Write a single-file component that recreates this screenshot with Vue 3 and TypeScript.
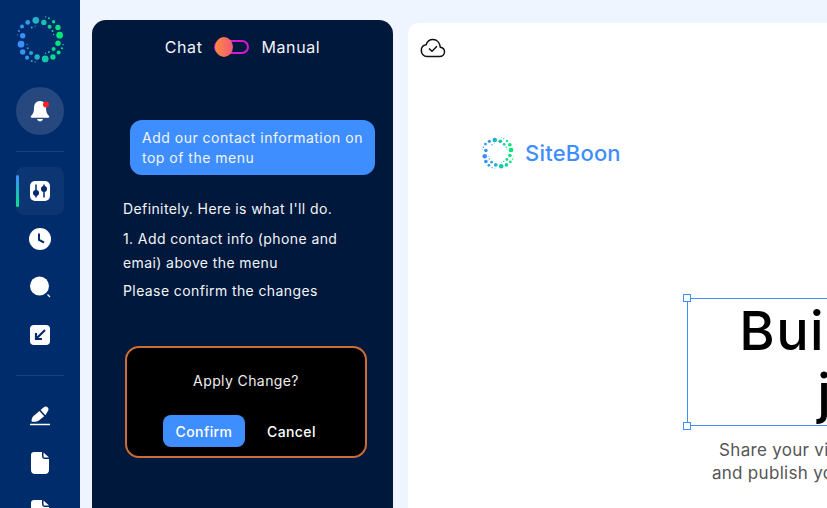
<template>
  <div class="app">
    <aside class="sidebar">
      <svg class="logo" viewBox="50 48 140 140">
        <circle v-for="(d, i) in dots" :key="i" :cx="d[0]" :cy="d[1]" :r="d[2]" :fill="dotColor(d[0])" />
      </svg>
      <div class="notify">
        <svg width="20" height="22" viewBox="0 0 20 22">
          <path d="M10 1C6 1 4 4 4 8c0 4-1 6-3 8-.6.7-.2 1.700.8 1.700h16.400c1 0 1.400-1 .8-1.700-2-2-3-4-3-8 0-4-2-7-6-7z" fill="#fff" />
          <path d="M7 19h6c-.5 1.500-1.600 2.300-3 2.300S7.500 20.500 7 19z" fill="#fff" />
          <circle cx="16" cy="4.500" r="3" fill="#f5222d" />
        </svg>
      </div>
      <div class="divider"></div>
      <div class="item active">
        <svg width="20" height="20" viewBox="0 0 20 20">
          <rect width="20" height="20" rx="5" fill="#fff" />
          <path d="M6 3.500v13M14 3.500v13" stroke="#002c6b" stroke-width="1.500" />
          <circle cx="6" cy="12" r="3" fill="#002c6b" />
          <circle cx="14" cy="8" r="3" fill="#002c6b" />
        </svg>
      </div>
      <div class="item">
        <svg width="22" height="22" viewBox="0 0 22 22">
          <circle cx="11" cy="11" r="11" fill="#fff" />
          <path d="M10 5.500V12l5 2.500" fill="none" stroke="#002c6b" stroke-width="2" />
        </svg>
      </div>
      <div class="item">
        <svg width="22" height="22" viewBox="0 0 22 22">
          <circle cx="10.500" cy="10" r="9.500" fill="#fff" />
          <path d="M18.500 18.500l2.500 2.500" stroke="#fff" stroke-width="1.200" />
        </svg>
      </div>
      <div class="item">
        <svg width="20" height="20" viewBox="0 0 20 20">
          <rect width="20" height="20" rx="4" fill="#fff" />
          <path d="M15 5L6 14M6 8v6h6" fill="none" stroke="#002c6b" stroke-width="2.200" />
        </svg>
      </div>
      <div class="divider"></div>
      <div class="item">
        <svg width="20" height="21" viewBox="0 0 20 21">
          <path d="M1.500 16.500c0-2.500.8-4.300 2-5.400L9.400 6l4.800 5.200-5.700 4.500c-1.200.9-2.700 1-4.300 1H2.200c-.4 0-.7-.3-.7-.7z" fill="#fff" />
          <path d="M10.600 5l3.200-2.700c1.200-1 3-.9 4 .2s1 2.900-.2 4l-2.200 3.700z" fill="#fff" />
          <path d="M0 19.500h20" stroke="#fff" stroke-width="1.500" />
        </svg>
      </div>
      <div class="item">
        <svg width="18" height="22" viewBox="0 0 18 22">
          <path d="M3 0h8v4c0 2 1 3 3 3h4v11c0 2.500-1.500 4-4 4H4c-2.500 0-4-1.500-4-4V3c0-2 1-3 3-3z" fill="#fff" />
          <path d="M12.500 .5L18 5.500h-4c-1 0-1.500-.5-1.500-1.500z" fill="#fff" />
        </svg>
      </div>
      <div class="item">
        <svg width="18" height="22" viewBox="0 0 18 22">
          <path d="M3 0h8v4c0 2 1 3 3 3h4v11c0 2.500-1.500 4-4 4H4c-2.500 0-4-1.500-4-4V3c0-2 1-3 3-3z" fill="#fff" />
          <path d="M12.500 .5L18 5.500h-4c-1 0-1.500-.5-1.500-1.500z" fill="#fff" />
        </svg>
      </div>
    </aside>

    <section class="chat">
      <header class="mode">
        <span>Chat</span>
        <span class="toggle"><span class="knob"></span></span>
        <span>Manual</span>
      </header>
      <div class="bubble">Add our contact information on top of the menu</div>
      <div class="reply">
        <p>Definitely. Here is what I'll do.</p>
        <p class="step">1. Add contact info (phone and emai) above the menu</p>
        <p>Please confirm the changes</p>
      </div>
      <div class="apply">
        <div class="apply-title">Apply Change?</div>
        <div class="apply-actions">
          <button class="confirm">Confirm</button>
          <button class="cancel">Cancel</button>
        </div>
      </div>
    </section>

    <main class="canvas">
      <svg class="cloud" width="26" height="20" viewBox="0 0 26 20">
        <path d="M7 18.500h12.500c2.800 0 5-2 5-4.700 0-2.500-1.800-4.300-4.200-4.600C19.800 4.800 17 1.500 13 1.500c-3.500 0-6 2.300-6.800 5.200C3.300 7.200 1.300 9.500 1.300 12.400c0 3.400 2.500 6.100 5.700 6.100z" fill="none" stroke="#111" stroke-width="1.500" />
        <path d="M9 10.500l3 2.800 5-5" fill="none" stroke="#111" stroke-width="1.500" />
      </svg>
      <div class="brand">
        <svg class="brand-logo" viewBox="50 48 140 140">
          <circle v-for="(d, i) in dots" :key="i" :cx="d[0]" :cy="d[1]" :r="d[2]" :fill="dotColor(d[0])" />
        </svg>
        <span>SiteBoon</span>
      </div>
      <div class="selected">
        <span class="handle tl"></span>
        <span class="handle bl"></span>
        <h1>Build fast<br />just</h1>
      </div>
      <p class="sub">Share your vision, build your site<br />and publish your website in a click</p>
    </main>
  </div>
</template>

<script setup lang="ts">
// x, y, r measured off the logo
const dots: number[][] = [
  [67, 107, 8], [65, 79, 6], [82, 67, 7], [106, 61, 10], [130, 67, 8], [147, 80, 6],
  [172, 82, 8], [177, 105, 10], [172, 129, 8], [174, 157, 6], [157, 170, 8], [134, 176, 10],
  [110, 170, 8], [80, 172, 6], [67, 155, 8], [62, 132, 10], [92, 158, 6], [159, 146, 6],
  [56, 93, 3], [52, 104, 2], [94, 82, 3], [104, 78, 2], [135, 51, 2], [145, 55, 3],
  [159, 65, 5], [156, 93, 3], [159, 103, 2], [187, 133, 2], [184, 144, 3], [145, 155, 3],
  [135, 159, 2], [104, 185, 2], [94, 182, 3], [80, 133, 2], [82, 144, 3],
]

const dotColor = (x: number): string => {
  const t = Math.min(1, Math.max(0, (x - 60) / 115))
  const r = Math.round(60 - 60 * t)
  const g = Math.round(140 + 90 * t)
  const b = Math.round(255 - 135 * t)
  return `rgb(${r}, ${g}, ${b})`
}
</script>

<style>
html,
body {
  margin: 0;
  overflow: hidden;
}
</style>

<style scoped>
.app {
  display: flex;
  width: 827px;
  height: 508px;
  overflow: hidden;
  background: #eef5ff;
  font-family: Inter, "Open Sans", sans-serif;
}

.sidebar {
  flex: none;
  width: 80px;
  display: flex;
  flex-direction: column;
  align-items: center;
  background: #002c6b;
}

.logo {
  flex: none;
  width: 47px;
  height: 47px;
  margin-top: 16px;
  margin-bottom: 24px;
}

.notify {
  flex: none;
  width: 48px;
  height: 48px;
  display: flex;
  align-items: center;
  justify-content: center;
  border-radius: 50%;
  background: #26487f;
}

.divider {
  flex: none;
  width: 48px;
  height: 1px;
  margin: 16px 0 15px;
  background: #1a4079;
}

.item {
  flex: none;
  position: relative;
  width: 48px;
  height: 48px;
  display: flex;
  align-items: center;
  justify-content: center;
  border-radius: 8px;
}

.item.active {
  background: #0c3573;
}

.item.active::before {
  content: "";
  position: absolute;
  left: 0;
  top: 8px;
  width: 3px;
  height: 32px;
  border-radius: 2px;
  background: linear-gradient(#3c8cff, #00e68a);
}

.chat {
  flex: none;
  width: 301px;
  margin: 20px 15px 0 12px;
  box-sizing: border-box;
  padding: 0 18px 0 31px;
  border-radius: 14px 14px 0 0;
  background: #00183b;
  color: #f2f5fa;
  font-size: 14px;
  letter-spacing: 0.4px;
}

.mode {
  display: flex;
  align-items: center;
  justify-content: center;
  gap: 12px;
  height: 54px;
  margin-left: -31px;
  margin-right: -18px;
  font-size: 16px;
  letter-spacing: 0.6px;
}

.toggle {
  position: relative;
  box-sizing: border-box;
  width: 35px;
  height: 14px;
  border: 2.500px solid #d31bd6;
  border-radius: 7px;
}

.knob {
  position: absolute;
  left: -1px;
  top: -5px;
  width: 18px;
  height: 20px;
  border-radius: 50%;
  background: linear-gradient(90deg, #ff8a3d, #ef5a7a);
}

.bubble {
  width: 245px;
  box-sizing: border-box;
  margin: 46px 0 0 7px;
  padding: 8px 12px 7px;
  border-radius: 12px;
  background: #3f8eff;
  letter-spacing: 0.5px;
  line-height: 20px;
}

.reply {
  margin-top: 22px;
  line-height: 24px;
}

.reply p {
  margin: 0;
  padding-bottom: 6px;
}

.reply .step {
  padding-bottom: 4px;
  width: 235px;
}

.apply {
  width: 242px;
  height: 112px;
  box-sizing: border-box;
  margin: 37px 0 0 2px;
  padding-top: 23px;
  border: 2px solid #c96f35;
  border-radius: 14px;
  background: #000;
  text-align: center;
}

.apply-title {
  line-height: 20px;
  color: #eee;
}

.apply-actions {
  display: flex;
  align-items: center;
  margin: 24px 0 0 36px;
}

button {
  border: 0;
  font: inherit;
  font-weight: 500;
  letter-spacing: inherit;
  color: #fff;
  background: none;
  padding: 0;
}

.confirm {
  width: 82px;
  height: 32px;
  border-radius: 8px;
  background: #3f8eff;
}

.cancel {
  margin-left: 22px;
}

.canvas {
  flex: 1;
  min-width: 0;
  margin-top: 23px;
  overflow: hidden;
  border-radius: 10px 0 0 0;
  background: #fff;
}

.cloud {
  display: block;
  margin: 15px 0 0 12px;
}

.brand {
  display: flex;
  align-items: center;
  gap: 11px;
  margin: 79px 0 0 74px;
  color: #3f8eff;
  font-size: 22px;
  font-weight: 500;
  letter-spacing: 0.2px;
}

.brand-logo {
  width: 32px;
  height: 32px;
}

.selected {
  position: relative;
  width: 360px;
  height: 128px;
  box-sizing: border-box;
  margin: 129px 0 0 279px;
  border: 1px solid #3f8eff;
}

.handle {
  position: absolute;
  left: -5px;
  width: 6px;
  height: 6px;
  border: 1px solid #3f8eff;
  background: #fff;
}

.tl {
  top: -5px;
}

.bl {
  bottom: -5px;
}

h1 {
  margin: 0;
  color: #000;
  font-size: 54px;
  font-weight: 500;
  letter-spacing: 1.500px;
  line-height: 63px;
  text-align: center;
  white-space: nowrap;
}

.sub {
  width: 336px;
  margin: 13px 0 0 279px;
  color: #555;
  font-size: 17px;
  line-height: 23px;
  letter-spacing: 0.3px;
  text-align: center;
  white-space: nowrap;
}
</style>
